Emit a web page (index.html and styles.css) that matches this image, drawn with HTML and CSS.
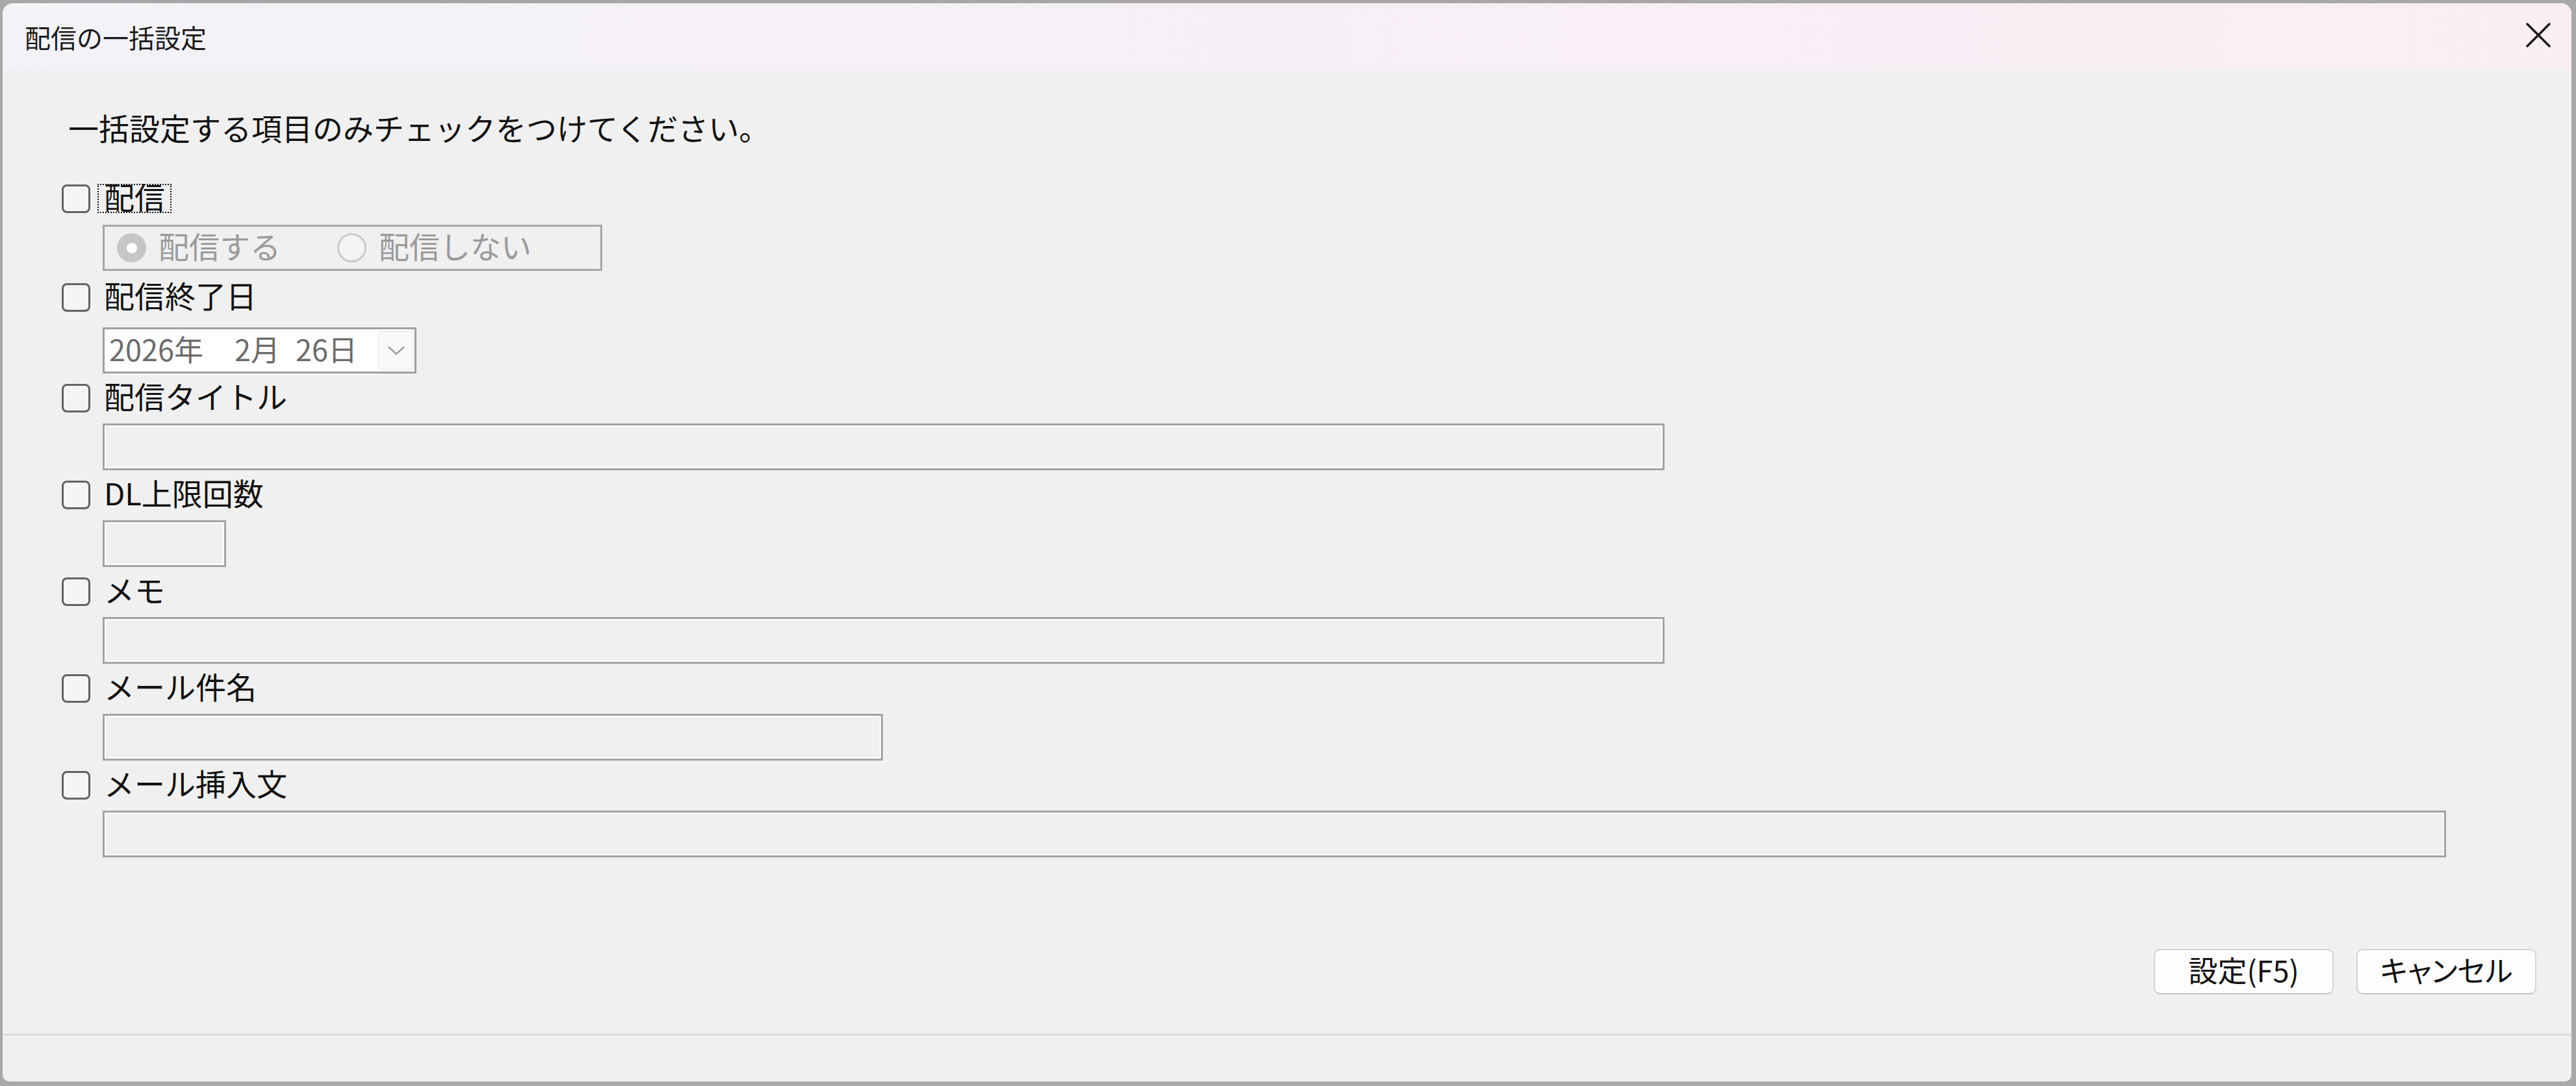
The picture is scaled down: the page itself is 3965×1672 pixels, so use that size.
FILE: index.html
```html
<!DOCTYPE html>
<html lang="ja">
<head>
<meta charset="utf-8">
<title>配信の一括設定</title>
<link rel="stylesheet" href="styles.css">
</head>
<body>
<div class="window">
  <div class="titlebar">
    <span class="title">配信の一括設定</span>
    <span class="close">
      <svg width="38" height="38" viewBox="0 0 38 38"><path d="M2 2 L36 36 M36 2 L2 36" stroke="#1b1b1b" stroke-width="3.5" stroke-linecap="round" fill="none"/></svg>
    </span>
  </div>
  <div class="content">
    <p class="intro">一括設定する項目のみチェックをつけてください。</p>
    <div class="fields">
      <div class="row"><span class="cb"></span><span class="label focus">配信</span></div>
      <div class="group">
        <span class="radio-item"><span class="radio on"></span><span class="rtext">配信する</span></span>
        <span class="radio-item second"><span class="radio off"></span><span class="rtext">配信しない</span></span>
      </div>

      <div class="row after-group"><span class="cb"></span><span class="label">配信終了日</span></div>
      <div class="datebox">
        <span class="d-y">2026年</span><span class="d-m">2月</span><span class="d-d">26日</span>
        <span class="dd-btn"><svg width="28" height="16" viewBox="0 0 28 16"><polyline points="2,2 14,13 26,2" fill="none" stroke="#a0a0a0" stroke-width="2.5"/></svg></span>
      </div>

      <div class="row"><span class="cb"></span><span class="label">配信タイトル</span></div>
      <div class="textbox tb-wide"></div>

      <div class="row"><span class="cb"></span><span class="label">DL上限回数</span></div>
      <div class="textbox tb-dl"></div>

      <div class="row"><span class="cb"></span><span class="label">メモ</span></div>
      <div class="textbox tb-wide"></div>

      <div class="row"><span class="cb"></span><span class="label">メール件名</span></div>
      <div class="textbox tb-mid"></div>

      <div class="row"><span class="cb"></span><span class="label">メール挿入文</span></div>
      <div class="textbox tb-full"></div>
    </div>
  </div>
  <div class="footer">
    <button class="btn">設定(F5)</button>
    <button class="btn kana">キャンセル</button>
  </div>
  <div class="status"></div>
</div>
</body>
</html>
```
FILE: styles.css
```css
html, body {
  margin: 0;
  padding: 0;
}
body {
  background: #a8a8a8;
  font-family: "Noto Sans CJK JP", "Noto Sans", sans-serif;
  color: #111;
  width: 3965px;
  height: 1672px;
  overflow: hidden;
}
.window {
  margin: 5px 0 0 4px;
  width: 3954px;
  height: 1660px;
  background: #f0f0f0;
  border-radius: 16px 16px 10px 10px;
  overflow: hidden;
  display: flex;
  flex-direction: column;
}
.titlebar {
  flex: none;
  height: 103px;
  display: flex;
  align-items: center;
  background: linear-gradient(90deg, #f3f2f7 0%, #f6f0f6 50%, #f9eef4 100%);
}
.title {
  margin-left: 34px;
  font-size: 40px;
  line-height: 40px;
  color: #1b1b1b;
}
.close {
  margin-left: auto;
  margin-right: 32px;
  margin-bottom: 6px;
  width: 38px;
  height: 38px;
  display: flex;
}
.content {
  flex: 1;
  padding-left: 91px;
}
.intro {
  margin: 64px 0 0 10px;
  height: 47px;
  font-size: 47px;
  line-height: 47px;
  color: #111;
  white-space: nowrap;
}
.fields {
  margin-top: 49px;
  display: flex;
  flex-direction: column;
  align-items: flex-start;
}
.row {
  height: 75px;
  display: flex;
  align-items: center;
}
.row.after-group {
  margin-top: 3px;
}
.cb {
  flex: none;
  width: 44px;
  height: 44px;
  box-sizing: border-box;
  border: 3px solid #626262;
  border-radius: 8px;
  background: #f4f4f4;
}
.label {
  margin-left: 11px;
  padding: 0 8px 0 8px;
  height: 45px;
  box-sizing: border-box;
  border: 2px dotted transparent;
  font-size: 47px;
  line-height: 33px;
  white-space: nowrap;
  color: #111;
}
.label.focus {
  border-color: #111;
}
.group {
  margin: 3px 0 0 63px;
  width: 769px;
  height: 71px;
  box-sizing: border-box;
  border: 3px solid #a6a6a6;
  display: flex;
  align-items: center;
  padding-left: 19px;
}
.radio-item {
  display: flex;
  align-items: center;
  color: #9a9a9a;
  font-size: 47px;
  line-height: 47px;
  white-space: nowrap;
}
.rtext {
  margin-bottom: 8px;
}
.radio-item.second {
  margin-left: 87px;
}
.radio {
  flex: none;
  width: 45px;
  height: 45px;
  border-radius: 50%;
  box-sizing: border-box;
  margin-right: 19px;
}
.radio.on {
  background: #c6c6c6;
  display: flex;
  align-items: center;
  justify-content: center;
}
.radio.on::after {
  content: "";
  width: 16px;
  height: 16px;
  border-radius: 50%;
  background: #fff;
}
.radio.off {
  border: 3px solid #c9c9c9;
  background: #f3f3f3;
}
.datebox {
  margin: 9px 0 0 63px;
  width: 483px;
  height: 71px;
  box-sizing: border-box;
  border: 3px solid #a0a0a0;
  background: #fff;
  display: flex;
  align-items: center;
  padding-left: 7px;
  color: #6b6b6b;
  font-size: 45px;
  line-height: 45px;
  white-space: nowrap;
}
.d-y, .d-m, .d-d {
  margin-bottom: 6px;
}
.d-y {
  width: 193px;
}
.d-m {
  width: 94px;
}
.dd-btn {
  margin-left: auto;
  margin-right: 1px;
  width: 55px;
  height: 59px;
  box-sizing: border-box;
  background: #f9f9f9;
  border: 1px solid #e6e6e6;
  border-radius: 4px;
  display: flex;
  align-items: center;
  justify-content: center;
}
.textbox {
  margin: 2px 0 0 63px;
  height: 72px;
  box-sizing: border-box;
  border: 3px solid #a3a3a3;
  box-shadow: inset 0 0 0 2px #fff;
  background: #f0f0f0;
}
.tb-wide {
  width: 2404px;
}
.tb-dl {
  width: 190px;
}
.tb-mid {
  width: 1201px;
}
.tb-full {
  width: 3607px;
}
.footer {
  flex: none;
  display: flex;
  justify-content: flex-end;
  gap: 35px;
  padding: 0 54px 61px 0;
}
.btn {
  width: 277px;
  height: 70px;
  box-sizing: border-box;
  margin: 0;
  padding: 0 0 8px 0;
  border: 2px solid #d4d4d4;
  border-bottom-color: #c2c2c2;
  border-radius: 10px;
  background: #fdfdfd;
  font-family: "Noto Sans CJK JP", "Noto Sans", sans-serif;
  font-size: 45px;
  line-height: 45px;
  color: #111;
  display: flex;
  align-items: center;
  justify-content: center;
}
.btn.kana {
  font-feature-settings: "palt";
}
.status {
  flex: none;
  height: 71px;
  border-top: 2px solid #d6d6d6;
}
```
